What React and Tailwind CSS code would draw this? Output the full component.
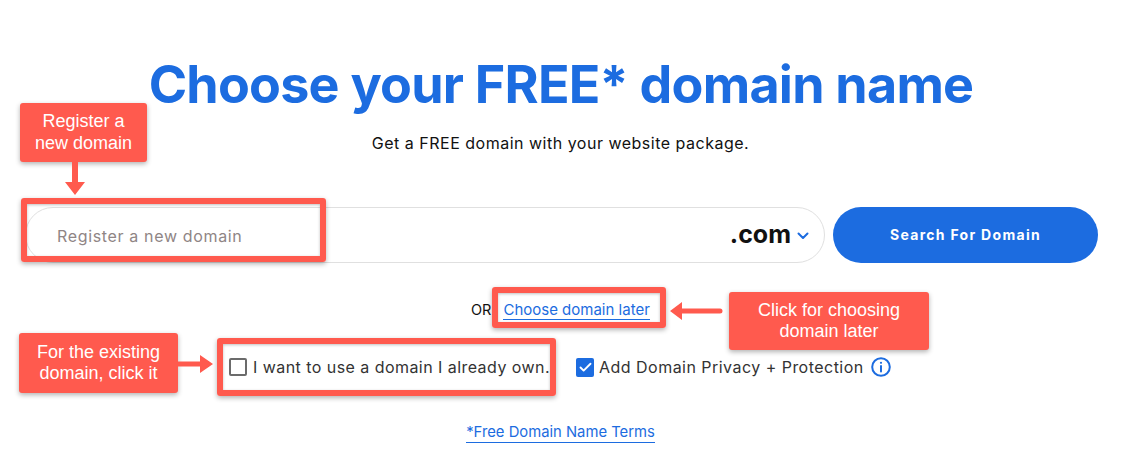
import { Check } from 'lucide-react';

function Callout({ className, children }) {
  return (
    <div className={`absolute flex items-center justify-center rounded-[3px] bg-[#ff5a4e] text-center font-['Liberation_Sans',sans-serif] text-[18px] leading-[21.5px] text-white shadow-[0_2px_5px_rgba(0,0,0,0.3)] ${className}`}>
      {children}
    </div>
  );
}

function Frame({ className }) {
  return (
    <div className={`absolute rounded-[3px] border-[6px] border-[#ff5a4e] shadow-[0_2px_5px_rgba(0,0,0,0.3),inset_0_1px_3px_rgba(0,0,0,0.25)] ${className}`} />
  );
}

export default function App() {
  return (
    <div className="relative h-[463px] w-[1121px] overflow-hidden bg-white font-['Inter',sans-serif]">
      {/* ── Page ── */}
      <h1 className="pt-[50px] pl-[1px] text-center text-[52px] leading-[70px] font-bold tracking-[-0.75px] text-[#1c6ce0]">
        Choose your FREE* domain name
      </h1>
      <p className="mt-[13px] text-center text-[16px] leading-[20px] tracking-[0.5px] text-[#111]">
        Get a FREE domain with your website package.
      </p>

      <div className="mt-[54px] flex gap-2 pl-[25px]">
        <div className="flex h-[56px] w-[800px] items-center rounded-full border border-[#e0e0e0] pr-[15px] pl-[31px]">
          <span className="flex-1 pt-[2px] text-[16px] tracking-[0.65px] text-[#8f8585]">Register a new domain</span>
          <span className="text-[25px] font-bold text-[#111]">.com</span>
          <svg className="mt-[2px] ml-[6px] h-[8px] w-[12px]" viewBox="0 0 12 8" fill="none" stroke="#1c6ce0" strokeWidth="2" strokeLinecap="round" strokeLinejoin="round">
            <path d="M1.5 1.5 6 6l4.500-4.500" />
          </svg>
        </div>
        <button className="h-[56px] w-[265px] rounded-full bg-[#1c6ce0] pb-[2px] text-[14px] font-bold tracking-[1.3px] text-white">
          Search For Domain
        </button>
      </div>

      <div className="mt-[37px] flex items-center pl-[471px] leading-[20px]">
        <span className="text-[14.5px] text-[#111]">OR</span>
        <a className="ml-[12px] border-b border-[#1c6ce0] text-[15px] leading-[19px] text-[#1c6ce0]">Choose domain later</a>
      </div>

      <div className="mt-[37px] flex items-center pl-[229px] text-[16px] leading-[20px] text-[#333]">
        <span className="h-[18px] w-[18px] rounded-[2px] border-2 border-[#6b6b6b]" />
        <span className="ml-[6px] tracking-[0.45px]">I want to use a domain I already own.</span>
        <span className="ml-[26px] flex h-[19px] w-[18px] items-center justify-center rounded-[2px] bg-[#1c6ce0]">
          <Check className="h-[15px] w-[15px] text-white" strokeWidth={3} />
        </span>
        <span className="ml-[5px] tracking-[0.47px]">Add Domain Privacy + Protection</span>
        <svg className="ml-[7px] h-[20px] w-[20px]" viewBox="0 0 20 20" fill="none" stroke="#1c6ce0" strokeWidth="2">
          <circle cx="10" cy="10" r="8.8" />
          <path d="M10 9v5.5" strokeLinecap="round" />
          <circle cx="10" cy="5.8" r="1.1" fill="#1c6ce0" stroke="none" />
        </svg>
      </div>

      <div className="mt-[46px] flex justify-center">
        <a className="border-b border-[#1c6ce0] text-[14.8px] leading-[19px] text-[#1c6ce0]">*Free Domain Name Terms</a>
      </div>

      {/* ── Annotations ── */}
      <Callout className="top-[103px] left-[20px] h-[59px] w-[127px]">Register a<br />new domain</Callout>
      <Callout className="top-[333px] left-[19px] h-[60px] w-[159px]">For the existing<br />domain, click it</Callout>
      <Callout className="top-[292px] left-[729px] h-[58px] w-[200px]">Click for choosing<br />domain later</Callout>

      <Frame className="top-[198px] left-[21px] h-[64px] w-[305px]" />
      <Frame className="top-[287px] left-[492px] h-[41px] w-[174px]" />
      <Frame className="top-[338px] left-[217px] h-[58px] w-[339px]" />

      <svg className="absolute top-[162px] left-[64px] h-[34px] w-[22px]" viewBox="0 0 22 34" fill="#ff5a4e">
        <path d="M8 0h6v20h7L11 33 1 20h7z" />
      </svg>
      <svg className="absolute top-[352px] left-[178px] h-[24px] w-[36px]" viewBox="0 0 36 24" fill="#ff5a4e">
        <path d="M0 9.5h22V3l13 9-13 9v-6.5H0z" />
      </svg>
      <svg className="absolute top-[300px] left-[669px] h-[22px] w-[54px]" viewBox="0 0 54 22" fill="#ff5a4e">
        <path d="M1 11 13 2v6.500h38a2.500 2.500 0 0 1 0 5H13V20z" />
      </svg>
    </div>
  );
}
